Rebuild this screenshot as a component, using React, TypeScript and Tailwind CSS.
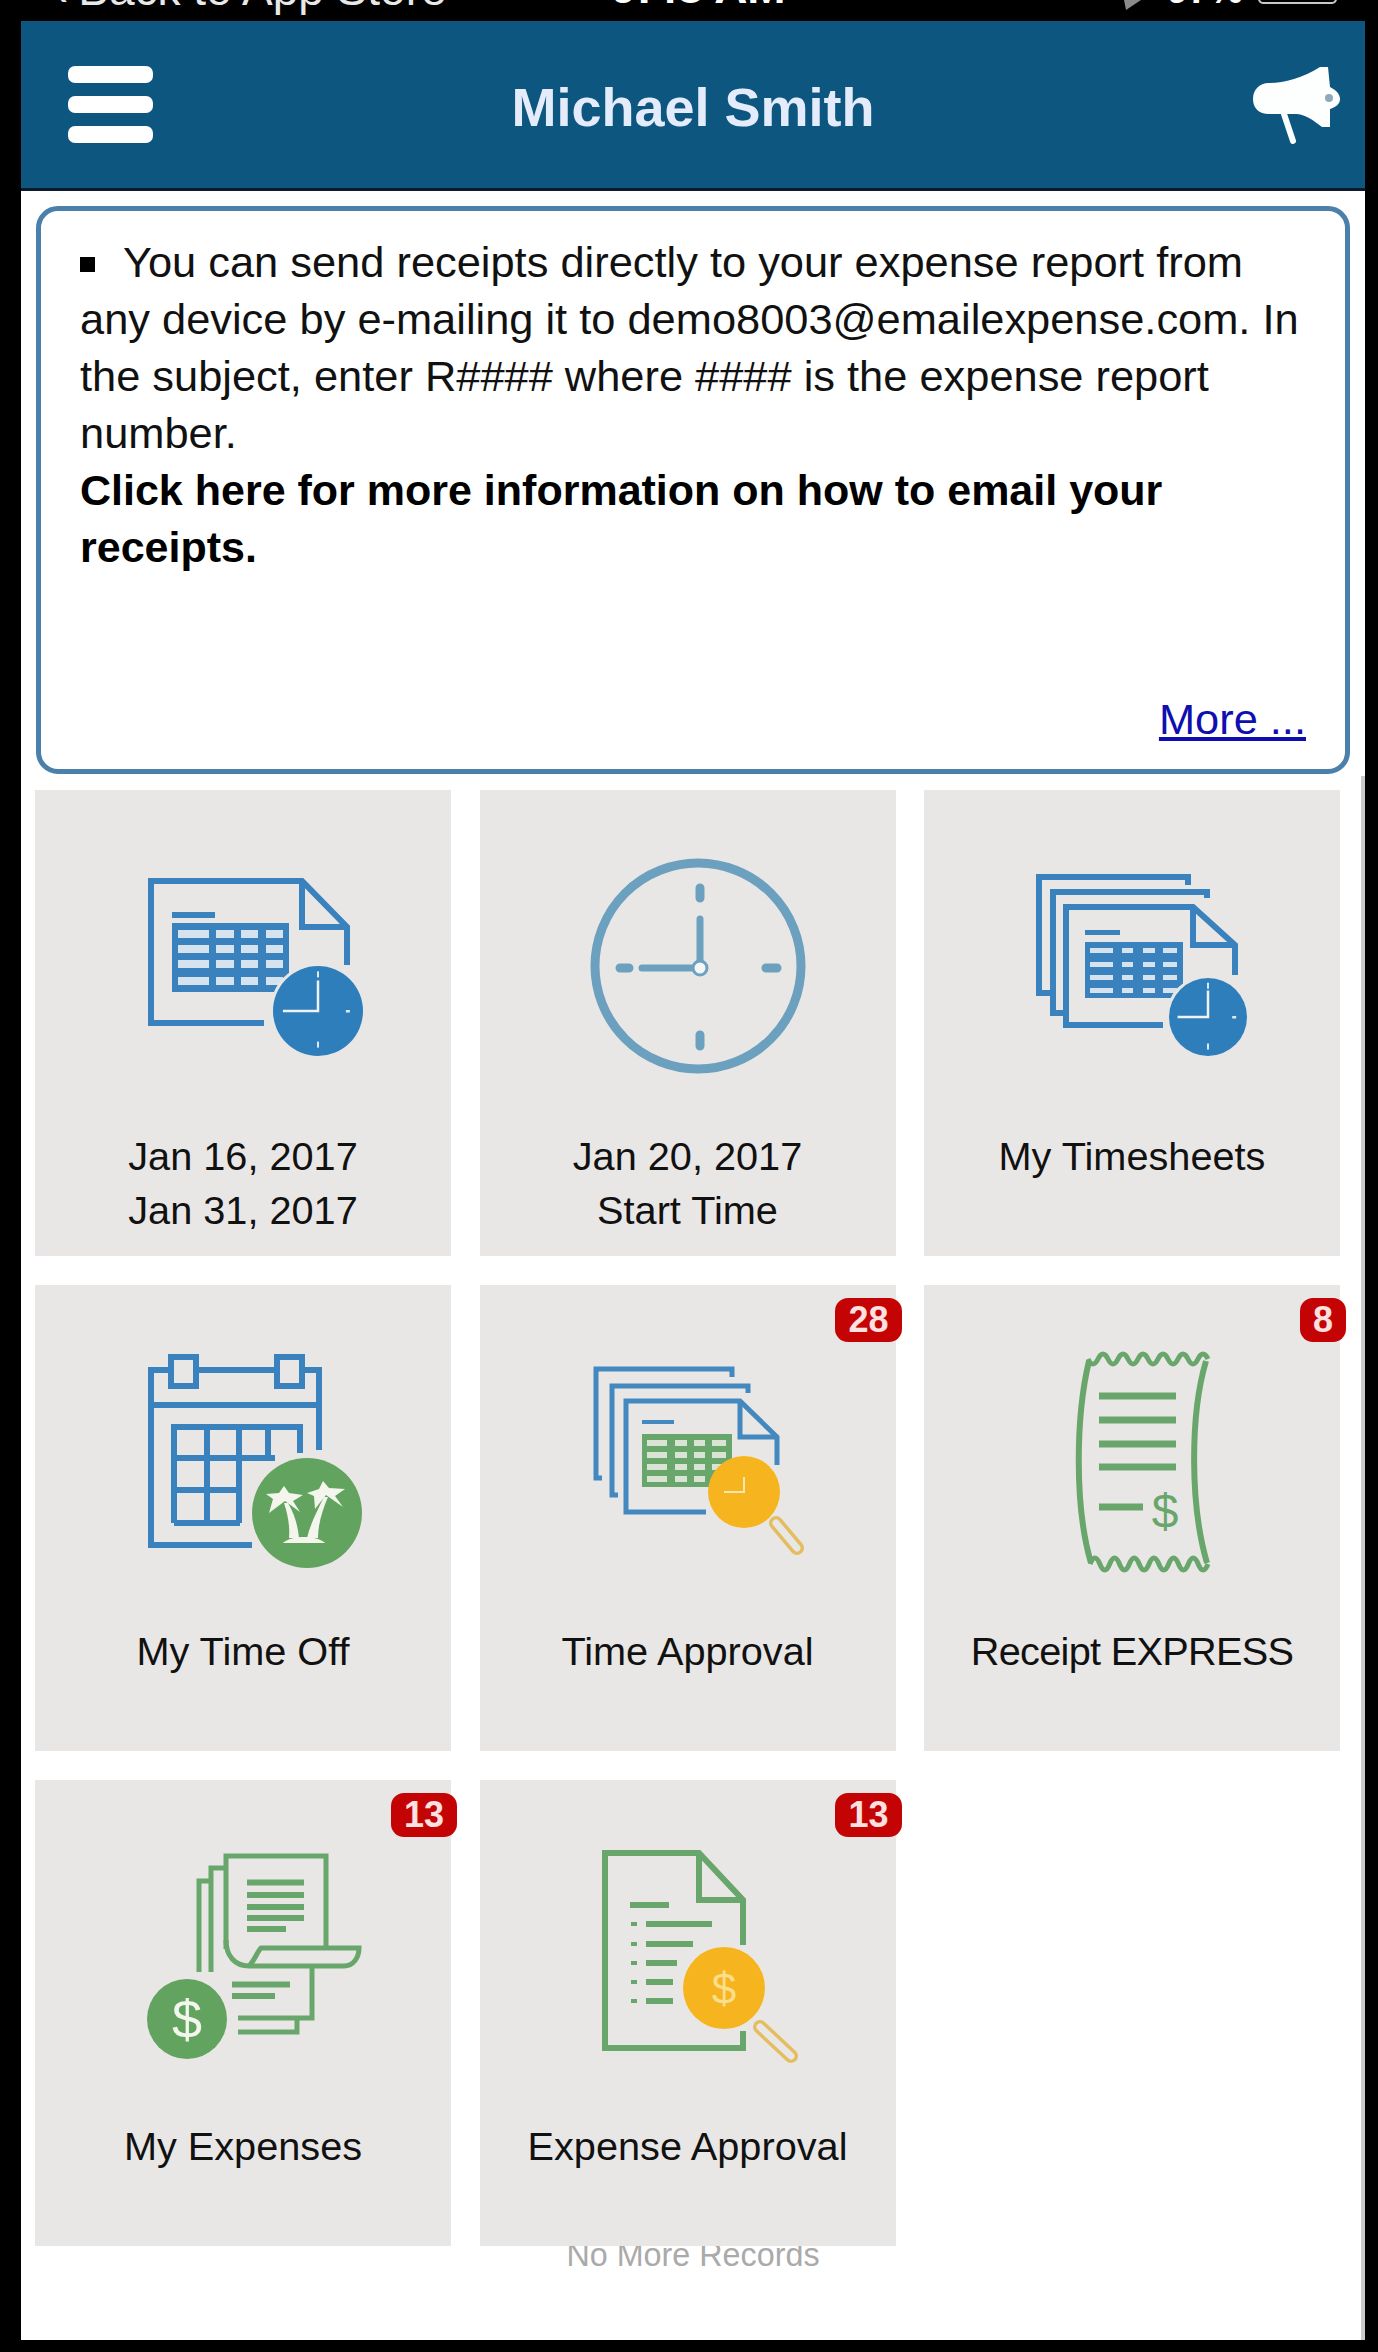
import type { ReactNode } from "react";

const BLUE = "#3a82bd";
const GREEN = "#69a66b";
const YELLOW = "#f6b51e";
const TILE = "#e9e7e6";

// wavy edge of the receipt
const wave = (x0: number, x1: number, y: number, teeth: number, amp: number) => {
  const step = (x1 - x0) / teeth;
  let d = `M${x0} ${y}`;
  for (let i = 0; i < teeth; i++) {
    d += ` q${step / 4} ${amp} ${step / 2} 0 q${step / 4} ${-amp} ${step / 2} 0`;
  }
  return d;
};

type TableProps = {
  x: number;
  y: number;
  w: number;
  h: number;
  rows: number[];
  cols: number[][];
  rowH: number;
  color: string;
  cell: string;
};

const Table = ({ x, y, w, h, rows, cols, rowH, color, cell }: TableProps) => (
  <g>
    <rect x={x} y={y} width={w} height={h} fill={color} />
    {rows.map((ry) =>
      cols.map(([cx, cw]) => (
        <rect key={`${ry}-${cx}`} x={cx} y={ry} width={cw} height={rowH} fill={cell} />
      )),
    )}
  </g>
);

const ClockBadge = ({ cx, cy, r, fill }: { cx: number; cy: number; r: number; fill: string }) => (
  <g>
    <circle cx={cx} cy={cy} r={r + 3} fill={TILE} />
    <circle cx={cx} cy={cy} r={r} fill={fill} />
    <path
      d={`M${cx} ${cy - r * 0.68}V${cy}H${cx - r * 0.78}`}
      fill="none"
      stroke="#eef3f6"
      strokeWidth={2.5}
    />
    <rect x={cx + r * 0.62} y={cy - 1} width={4} height={2.5} fill="#dfe9f2" />
    <rect x={cx - 1} y={cy + r * 0.68} width={2} height={6} fill="#dfe9f2" />
    <rect x={cx - 1} y={cy - r * 0.88} width={2} height={6} fill="#dfe9f2" />
  </g>
);

const Lens = ({ cx, cy, r, x1, y1, x2, y2 }: { cx: number; cy: number; r: number; x1: number; y1: number; x2: number; y2: number }) => (
  <g>
    <line x1={x1} y1={y1} x2={x2} y2={y2} stroke="#e3bd5e" strokeWidth={14} strokeLinecap="round" />
    <line x1={x1} y1={y1} x2={x2} y2={y2} stroke={TILE} strokeWidth={7} strokeLinecap="round" />
    <circle cx={cx} cy={cy} r={r} fill={YELLOW} />
  </g>
);

const TimesheetIcon = () => (
  <g>
    <g fill="none" stroke={BLUE} strokeWidth={6}>
      <path d="M229 233H116V91H267L312 137V175" />
      <path d="M267 91V137H312" />
    </g>
    <rect x={137} y={122} width={43} height={6} fill={BLUE} />
    <Table
      x={137}
      y={133}
      w={117}
      h={69}
      rows={[140, 155, 170, 187]}
      rowH={8}
      cols={[[143, 31], [181, 18], [206, 17], [231, 17]]}
      color={BLUE}
      cell="#d5e3ef"
    />
    <ClockBadge cx={283} cy={221} r={45} fill="#2e7ebc" />
  </g>
);

const StartClockIcon = () => (
  <g stroke="#6ba1bf" fill="none" strokeLinecap="round">
    <circle cx={218} cy={176} r={103} strokeWidth={9} />
    <path d="M220 129V170M162 178H212" strokeWidth={7} />
    <path d="M220 98V108M140 178H149M286 178H297M220 245V256" strokeWidth={9} />
    <circle cx={220} cy={178} r={7} strokeWidth={3} fill="#f5f5f3" />
  </g>
);

const TimesheetsIcon = () => (
  <g>
    <g fill="none" stroke={BLUE} strokeWidth={6}>
      <path d="M264 95V87H115V203H126" />
      <path d="M283 108V102H129V223H139" />
      <path d="M239 235H142V117H269L311 155V185" />
      <path d="M269 117V155H311" />
    </g>
    <rect x={161} y={140} width={35} height={5} fill={BLUE} />
    <Table
      x={161}
      y={152}
      w={98}
      h={56}
      rows={[158, 172, 185, 198]}
      rowH={5}
      cols={[[166, 23], [198, 11], [219, 12], [239, 14]]}
      color={BLUE}
      cell="#d5e3ef"
    />
    <ClockBadge cx={284} cy={227} r={39} fill="#2e7ebc" />
  </g>
);

const TimeOffIcon = () => (
  <g>
    <g fill="none" stroke={BLUE} strokeWidth={6}>
      <path d="M217 260H116V85H284V165" />
      <path d="M116 120H284" />
      <rect x={136} y={72} width={25} height={29} fill={TILE} />
      <rect x={242} y={72} width={25} height={29} fill={TILE} />
      <path d="M139 238V142H265V168" />
      <path d="M139 173H240M139 205H205M139 238H205" />
      <path d="M172 142V238M204 142V238M233 142V173" />
    </g>
    <circle cx={272} cy={228} r={58} fill={TILE} />
    <circle cx={272} cy={228} r={55} fill="#62a35f" />
    <g fill="#f4f6ee">
      <path d="M249 218L253 218C260 230 263 242 264 253L254 253C255 242 253 230 249 218Z" />
      <path d="M289 212L293 212C287 226 283 240 283 253L272 253C275 240 282 226 289 212Z" />
      <path d="M248 258C256 250 282 250 290 258Z" />
      <path d="M250 216L234 228L238 214L231 209L244 208L249 201L254 208L268 210L258 216L265 227Z" />
      <path d="M291 210L280 224L279 211L272 208L284 204L288 196L294 203L310 204L300 211L308 222Z" />
    </g>
  </g>
);

const ApprovalIcon = () => (
  <g>
    <g fill="none" stroke="#4388be" strokeWidth={5}>
      <path d="M252 92V84H116V193H122" />
      <path d="M268 108V101H132V210H138" />
      <path d="M226 227H146V116H260L297 152V180" />
      <path d="M260 116V152H297" />
    </g>
    <rect x={162} y={135} width={32} height={4} fill="#4388be" />
    <Table
      x={162}
      y={149}
      w={90}
      h={53}
      rows={[155, 167, 179, 191]}
      rowH={6}
      cols={[[167, 20], [195, 12], [214, 11], [232, 14]]}
      color={GREEN}
      cell="#d9e4d4"
    />
    <Lens cx={264} cy={207} r={36} x1={296} y1={238} x2={317} y2={263} />
    <path d="M264 192V207H244" fill="none" stroke="#fbe7ad" strokeWidth={2} />
  </g>
);

const ReceiptIcon = () => (
  <g fill="none" stroke={GREEN}>
    <path d="M165 76C152 130 150 220 167 278" strokeWidth={6} />
    <path d="M282 76C266 130 266 220 283 278" strokeWidth={6} />
    <path d={wave(164, 284, 74, 6, 10)} strokeWidth={5} />
    <path d={wave(166, 284, 279, 6, -12)} strokeWidth={5} />
    <path d="M175 111H252M175 135H252M175 159H252M175 182H252M175 222H219" strokeWidth={7} />
    <text
      x={241}
      y={243}
      textAnchor="middle"
      stroke="none"
      fill={GREEN}
      fontSize={48}
      fontFamily="'Liberation Sans', sans-serif"
    >
      $
    </text>
  </g>
);

const ExpensesIcon = () => (
  <g>
    <g fill="none" stroke={GREEN} strokeWidth={5}>
      <path d="M191 169V76H291V167" />
      <path d="M191 160C191 176 200 186 214 186H309C318 186 324 178 324 168H226C222 172 220 180 214 186" />
      <path d="M190 88H176V192M176 101H164V192" />
      <path d="M277 188V238H203M262 238V252H203" />
    </g>
    <path
      d="M212 102.5H269M212 115H269M212 127H269M212 138H269M212 149H251M197 204.5H255M197 216H240"
      stroke={GREEN}
      strokeWidth={6}
    />
    <circle cx={152} cy={239} r={40} fill="#62a35f" />
    <text
      x={152}
      y={258}
      textAnchor="middle"
      fill="#f2f6ec"
      fontSize={54}
      fontFamily="'Liberation Sans', sans-serif"
    >
      $
    </text>
  </g>
);

const ExpenseApprovalIcon = () => (
  <g>
    <g fill="none" stroke={GREEN} strokeWidth={6}>
      <path d="M263 251V268H125V73H219L263 120V165" />
      <path d="M219 73V120H263" />
    </g>
    <path
      d="M150 125H189M166 144H232M166 164H213M166 183H197M166 202H193M166 221H193"
      stroke={GREEN}
      strokeWidth={6}
    />
    <path d="M151 144H157M151 164H157M151 183H157M151 202H157M151 221H157" stroke={GREEN} strokeWidth={4} />
    <Lens cx={244} cy={208} r={41} x1={280} y1={247} x2={311} y2={276} />
    <text
      x={244}
      y={224}
      textAnchor="middle"
      fill="#fbdd8e"
      fontSize={44}
      fontFamily="'Liberation Sans', sans-serif"
    >
      $
    </text>
  </g>
);

type TileProps = {
  icon: ReactNode;
  lines: string[];
  badge?: string;
  labelClass?: string;
};

const Tile = ({ icon, lines, badge, labelClass }: TileProps) => (
  <div className="relative z-10 h-[466px] bg-[#e9e7e6]">
    <svg viewBox="0 0 416 339" className="block h-[339px] w-[416px]">
      {icon}
    </svg>
    <div className={`text-center text-[39.7px] leading-[54px] text-[#111] ${labelClass ?? ""}`}>
      {lines.map((line) => (
        <div key={line}>{line}</div>
      ))}
    </div>
    {badge && (
      <span className="absolute -right-[6px] top-[13px] flex h-[44px] min-w-[45px] items-center justify-center rounded-[13px] bg-[#c40404] px-[13px] text-[36px] font-bold text-[#fde0e0]">
        {badge}
      </span>
    )}
  </div>
);

const tiles: TileProps[] = [
  { icon: <TimesheetIcon />, lines: ["Jan 16, 2017", "Jan 31, 2017"] },
  { icon: <StartClockIcon />, lines: ["Jan 20, 2017", "Start Time"] },
  { icon: <TimesheetsIcon />, lines: ["My Timesheets"] },
  { icon: <TimeOffIcon />, lines: ["My Time Off"] },
  { icon: <ApprovalIcon />, lines: ["Time Approval"], badge: "28" },
  { icon: <ReceiptIcon />, lines: ["Receipt EXPRESS"], badge: "8", labelClass: "tracking-[-0.7px]" },
  { icon: <ExpensesIcon />, lines: ["My Expenses"], badge: "13" },
  { icon: <ExpenseApprovalIcon />, lines: ["Expense Approval"], badge: "13" },
];

const Megaphone = () => (
  <svg viewBox="0 0 87 78" className="h-[78px] w-[87px]">
    <path
      d="M16 17C30 17 50 12 67 1H75L77 21C83 24 87 28 87 33C87 38 83 41 77 43L77 61H69C60 54 53 49 44 48H16C6 48 0 42 0 33C0 24 6 17 16 17Z"
      fill="#fdfefe"
    />
    <line x1={31} y1={48} x2={40} y2={75} stroke="#fdfefe" strokeWidth={6} strokeLinecap="round" />
    <circle cx={76} cy={32} r={4} fill="#8fa9ba" />
  </svg>
);

// top of the screenshot cuts through this bar, only the lower part of the text shows
const StatusBar = () => (
  <div className="flex h-[21px] items-start overflow-hidden pl-[53px] pr-[41px] leading-[44px] text-white">
    <div className="-mt-[33px] flex w-[390px] shrink-0 gap-[10px] whitespace-nowrap text-[46px] text-[#e8e8e8]">
      <span>‹</span>
      <span>Back to App Store</span>
    </div>
    <span className="-mt-[35px] ml-[168px] whitespace-nowrap text-[46px] font-bold">9:48 AM</span>
    <div className="ml-auto flex items-start">
      <svg viewBox="0 0 18 11" className="mr-[25px] h-[11px] w-[18px]">
        <path d="M0 0H17L2 10Z" fill="#8a8a8a" />
      </svg>
      <span className="-mt-[32px] text-[38px] font-bold">97%</span>
      <span className="-mt-[36px] ml-[15px] h-[40px] w-[79px] rounded-[5px] border-2 border-[#c8c8c8]" />
    </div>
  </div>
);

export default function App() {
  return (
    <div className="flex h-[2352px] w-[1378px] flex-col bg-black font-['Liberation_Sans',Arial,sans-serif]">
      <StatusBar />

      <main className="relative ml-[21px] mr-[13px] h-[2319px] overflow-hidden bg-white">
        {/* Title bar */}
        <header className="grid h-[170px] grid-cols-[1fr_auto_1fr] items-center border-b-[3px] border-[#0a1c2c] bg-[#0d5680] px-[25px]">
          <div className="ml-[22px] flex w-[85px] flex-col gap-[13px]">
            <div className="h-[17px] rounded-[7px] bg-white" />
            <div className="h-[17px] rounded-[7px] bg-white" />
            <div className="h-[17px] rounded-[7px] bg-white" />
          </div>
          <h1 className="mt-[5px] text-[54px] font-bold text-[#e4ebfa]">Michael Smith</h1>
          <div className="justify-self-end">
            <Megaphone />
          </div>
        </header>

        {/* Tip of the day */}
        <section className="mx-[15px] mt-[15px] flex h-[568px] flex-col rounded-[22px] border-[5px] border-[#4a80a9] bg-white px-[39px] pb-[21px] pt-[23px] text-[43.4px] leading-[57px] text-[#111]">
          <p>
            <span className="mb-[5px] mr-[28px] inline-block h-[15px] w-[15px] bg-black" />
            You can send receipts directly to your expense report from any device by e-mailing it to
            demo8003@emailexpense.com. In the subject, enter R#### where #### is the expense report number.
          </p>
          <p className="text-[43px] font-bold text-black">
            Click here for more information on how to email your receipts.
          </p>
          <a href="#" className="mt-auto self-end text-[#0f0fb0] underline">
            More ...
          </a>
        </section>

        <div className="mx-[14px] mt-[16px] grid grid-cols-[repeat(3,416px)] gap-x-[28.5px] gap-y-[29px]">
          {tiles.map((tile) => (
            <Tile key={tile.lines.join()} {...tile} />
          ))}
        </div>

        <p className="-mt-[11px] text-center text-[32.3px] leading-[40px] text-[#aaaaaa]">No More Records</p>

        {/* scroll thumb */}
        <div className="absolute bottom-0 right-0 top-[755px] w-[4px] bg-[#cbcbcb]" />
      </main>
    </div>
  );
}
